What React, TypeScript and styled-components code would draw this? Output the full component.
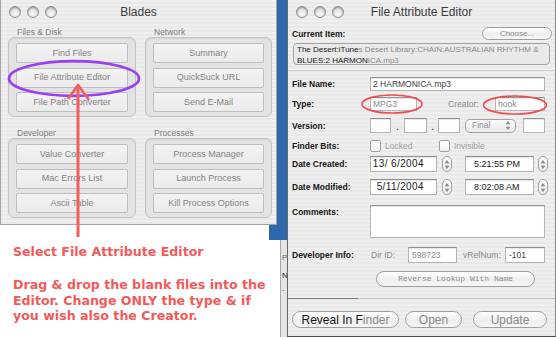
import React from "react";
import styled, { createGlobalStyle } from "styled-components";

const SANS = `"Liberation Sans", Arial, Helvetica, sans-serif`;
const MONO = `"Liberation Mono", "DejaVu Sans Mono", monospace`;
const NOTE = `"DejaVu Sans", Verdana, sans-serif`;

const GlobalStyle = createGlobalStyle`
  html, body { margin: 0; padding: 0; background: #ffffff; }
  body { font-family: ${SANS}; }
  #root { width: 560px; height: 339px; overflow: hidden; }
`;

const stripes = `repeating-linear-gradient(180deg, #efefef 0px, #efefef 2px, #e9e9e9 2px, #e9e9e9 4px)`;

const Page = styled.div`
  position: relative;
  display: flex;
  align-items: flex-start;
  width: 560px;
  height: 339px;
  background: #ffffff;
  overflow: hidden;
`;

const LeftColumn = styled.div`
  flex: none;
  width: 277px;
  display: flex;
  flex-direction: column;
`;

const Window = styled.div<{ $w: number; $h: number; $active?: boolean }>`
  flex: none;
  box-sizing: border-box;
  width: ${(p) => p.$w}px;
  height: ${(p) => p.$h}px;
  display: flex;
  flex-direction: column;
  background: ${stripes};
  border: 1px solid #a4a4a4;
  border-top: none;
  ${(p) =>
    p.$active &&
    `border-left-color: #666666; border-right-color: #8c8c8c; border-bottom-color: #4a4a4a;`}
`;

const TitleBar = styled.div`
  flex: none;
  height: 22px;
  box-sizing: border-box;
  padding: 0 8px;
  display: grid;
  grid-template-columns: 1fr auto 1fr;
  align-items: center;
`;

const Lights = styled.div`
  display: flex;
  gap: 6px;
  padding-top: 2px;
`;

const Light = styled.span`
  width: 12px;
  height: 12px;
  box-sizing: border-box;
  border-radius: 50%;
  border: 1px solid #8c8c8c;
  background: radial-gradient(circle at 50% 70%, #fbfbfb 0%, #e4e4e4 45%, #b4b4b4 100%);
  box-shadow: inset 0 1px 1px rgba(0, 0, 0, 0.18);
`;

const Title = styled.div`
  font: 12px/14px ${SANS};
  color: #3c3c3c;
  padding-top: 2px;
`;

/* ---------- Blades ---------- */

const BladesBody = styled.div`
  display: grid;
  grid-template-columns: 128px 127px;
  column-gap: 9px;
  padding: 5px 0 0 7px;
`;

const BladeColumn = styled.div`
  display: flex;
  flex-direction: column;
`;

const SectionLabel = styled.div<{ $first?: boolean }>`
  font: 8.5px/10px ${SANS};
  color: #7c7c7c;
  padding-left: 9px;
  margin-top: ${(p) => (p.$first ? 0 : 11)}px;
`;

const Group = styled.div`
  box-sizing: border-box;
  height: 80px;
  border: 1px solid #c3c3c3;
  border-radius: 6px;
  background: #e3e3e3;
  box-shadow: inset 0 1px 2px rgba(0, 0, 0, 0.07);
  padding: 5px 7px 0 7px;
  display: flex;
  flex-direction: column;
  gap: 4.5px;
`;

const BladeButton = styled.div`
  box-sizing: border-box;
  height: 20px;
  border: 1px solid #bebebe;
  border-radius: 2px;
  background: linear-gradient(180deg, #f3f3f3 0%, #ebebeb 100%);
  display: flex;
  align-items: center;
  justify-content: center;
  font: 9px/1 ${SANS};
  color: #838383;
  white-space: nowrap;
`;

/* ---------- annotation ---------- */

const BlueCornerRow = styled.div`
  flex: none;
  height: 15px;
  display: flex;
  justify-content: flex-end;
`;

const BlueCorner = styled.div`
  width: 8px;
  background: #2f67ad;
`;

const Annotation = styled.div`
  padding: 3.5px 0 0 13px;
  font: bold 12.6px/15.5px ${NOTE};
  color: #f25a5a;
  white-space: nowrap;
`;

const Note = styled.p<{ $gap?: number }>`
  margin: ${(p) => p.$gap ?? 0}px 0 0 0;
`;

/* ---------- gutter between windows ---------- */

const Gutter = styled.div`
  flex: none;
  width: 10px;
  height: 337px;
  display: flex;
  flex-direction: column;
`;

const BlueGutter = styled.div`
  flex: none;
  height: 240px;
  background: #2f67ad;
`;

const Fragment = styled.div`
  flex: 1;
  margin-left: 3px;
  background: #e4e4e4;
  border-left: 1px solid #a8a8a8;
  display: flex;
  flex-direction: column;
  overflow: hidden;
`;

const FragGlyph = styled.span<{ $mt: number; $dark?: boolean }>`
  margin-top: ${(p) => p.$mt}px;
  font: 8px/9px ${SANS};
  color: ${(p) => (p.$dark ? "#222" : "#666")};
  padding-left: 1px;
`;

/* ---------- File Attribute Editor ---------- */

const Row = styled.div<{ $top: number; $h: number; $pr?: number; $pl?: number; $between?: boolean }>`
  flex: none;
  display: flex;
  align-items: center;
  height: ${(p) => p.$h}px;
  margin-top: ${(p) => p.$top}px;
  padding-left: ${(p) => p.$pl ?? 4}px;
  padding-right: ${(p) => p.$pr ?? 10}px;
  justify-content: ${(p) => (p.$between ? "space-between" : "flex-start")};
`;

const Label = styled.div<{ $alignTop?: boolean }>`
  flex: none;
  width: 78px;
  font: bold 8.5px/10px ${SANS};
  color: #161616;
  white-space: nowrap;
  align-self: ${(p) => (p.$alignTop ? "flex-start" : "center")};
  margin-top: ${(p) => (p.$alignTop ? 2 : 0)}px;
`;

const SubLabel = styled.div<{ $w: number; $ml?: number }>`
  flex: none;
  width: ${(p) => p.$w}px;
  margin-left: ${(p) => p.$ml ?? 0}px;
  font: 8.5px/10px ${SANS};
  color: #8a8a8a;
  white-space: nowrap;
`;

const PathBox = styled.div`
  flex: none;
  box-sizing: border-box;
  height: 22px;
  margin: 3px 5px 0 5px;
  border: 1px solid #a3a3a3;
  border-radius: 4px;
  background: #e9e9e9;
  padding: 1px 0 0 3px;
  font: 8px/10.5px ${SANS};
  white-space: nowrap;
  overflow: hidden;
`;

const Tone = styled.span<{ $dark?: boolean }>`
  color: ${(p) => (p.$dark ? "#161616" : "#8a8a8a")};
`;

const Separator = styled.div<{ $top: number; $dark?: boolean }>`
  flex: none;
  height: 1px;
  margin: ${(p) => p.$top}px 0 0 0;
  background: ${(p) =>
    p.$dark
      ? "linear-gradient(90deg, #7a7a7a 0px, #7a7a7a 70px, #c6c6c6 70px)"
      : "#cfcfcf"};
`;

const Field = styled.div<{
  $w?: number;
  $ml?: number;
  $right?: boolean;
  $pad?: number;
  $size?: number;
  $tone?: string;
  $ls?: number;
}>`
  box-sizing: border-box;
  height: 100%;
  ${(p) => (p.$w ? `width: ${p.$w}px; flex: none;` : `flex: 1;`)}
  margin-left: ${(p) => p.$ml ?? 0}px;
  background: #ffffff;
  border: 1px solid #b4b4b4;
  border-top-color: #8f8f8f;
  box-shadow: inset 0 1px 1px rgba(0, 0, 0, 0.1);
  display: flex;
  align-items: center;
  justify-content: ${(p) => (p.$right ? "flex-end" : "flex-start")};
  padding: 0 ${(p) => p.$pad ?? 2}px;
  font: ${(p) => p.$size ?? 8.5}px/1 ${SANS};
  letter-spacing: ${(p) => p.$ls ?? 0}px;
  color: ${(p) => p.$tone ?? "#333"};
  white-space: nowrap;
  overflow: hidden;
`;

const Dot = styled.span<{ $w: number }>`
  flex: none;
  width: ${(p) => p.$w}px;
  text-align: center;
  font: bold 9px/1 ${SANS};
  color: #555;
  padding-top: 3px;
`;

const Popup = styled.div<{ $w: number; $ml: number }>`
  flex: none;
  box-sizing: border-box;
  width: ${(p) => p.$w}px;
  height: 14px;
  margin-left: ${(p) => p.$ml}px;
  border: 1px solid #a3a3a3;
  border-radius: 5px;
  background: linear-gradient(180deg, #fbfbfb 0%, #e8e8e8 100%);
  display: flex;
  align-items: center;
  justify-content: space-between;
  padding: 0 4px 0 6px;
  font: 8.5px/1 ${SANS};
  color: #8c8c8c;
`;

const Stepper = styled.div<{ $ml: number }>`
  flex: none;
  box-sizing: border-box;
  width: 10px;
  height: 16px;
  margin-left: ${(p) => p.$ml}px;
  border: 1px solid #a2a2a2;
  border-radius: 5px;
  background: linear-gradient(180deg, #ffffff 0%, #ececec 100%);
  display: flex;
  align-items: center;
  justify-content: center;
`;

const CheckItem = styled.div<{ $w: number }>`
  flex: none;
  width: ${(p) => p.$w}px;
  display: flex;
  align-items: center;
  gap: 4px;
`;

const CheckBox = styled.span`
  box-sizing: border-box;
  width: 11px;
  height: 12px;
  border: 1px solid #a0a0a0;
  border-radius: 2px;
  background: linear-gradient(180deg, #ffffff 0%, #f0f0f0 100%);
`;

const CheckText = styled.span`
  font: 8.5px/1 ${SANS};
  color: #a0a0a0;
`;

const Pill = styled.div<{ $w: number; $h: number; $size: number; $ml?: number; $mono?: boolean }>`
  flex: none;
  box-sizing: border-box;
  width: ${(p) => p.$w}px;
  height: ${(p) => p.$h}px;
  margin-left: ${(p) => p.$ml ?? 0}px;
  border: 1px solid #9e9e9e;
  border-radius: 999px;
  background: linear-gradient(180deg, #ffffff 0%, #efefef 55%, #f6f6f6 100%);
  display: flex;
  align-items: center;
  justify-content: center;
  font: ${(p) => p.$size}px/1 ${(p) => (p.$mono ? MONO : SANS)};
  color: #8a8a8a;
  white-space: nowrap;
`;

const Overlay = styled.svg`
  position: absolute;
  left: 0;
  top: 0;
  pointer-events: none;
`;

const Arrows = () => (
  <svg width="6" height="11" viewBox="0 0 6 11">
    <path d="M3 1 L5.4 4.2 H0.6 Z M3 10 L5.4 6.8 H0.6 Z" fill="#8a8a8a" />
  </svg>
);

const bladeGroups = [
  [
    { label: "Files & Disk", items: ["Find Files", "File Attribute Editor", "File Path Converter"] },
    { label: "Developer", items: ["Value Converter", "Mac Errors List", "Ascii Table"] },
  ],
  [
    { label: "Network", items: ["Summary", "QuickSuck URL", "Send E-Mail"] },
    { label: "Processes", items: ["Process Manager", "Launch Process", "Kill Process Options"] },
  ],
];

const TrafficLights = () => (
  <Lights>
    <Light />
    <Light />
    <Light />
  </Lights>
);

export default function App() {
  return (
    <>
      <GlobalStyle />
      <Page>
        <LeftColumn>
          <Window $w={277} $h={225}>
            <TitleBar>
              <TrafficLights />
              <Title>Blades</Title>
              <span />
            </TitleBar>
            <BladesBody>
              {bladeGroups.map((col, ci) => (
                <BladeColumn key={ci}>
                  {col.map((g, gi) => (
                    <React.Fragment key={g.label}>
                      <SectionLabel $first={gi === 0}>{g.label}</SectionLabel>
                      <Group>
                        {g.items.map((it) => (
                          <BladeButton key={it}>{it}</BladeButton>
                        ))}
                      </Group>
                    </React.Fragment>
                  ))}
                </BladeColumn>
              ))}
            </BladesBody>
          </Window>
          <BlueCornerRow>
            <BlueCorner />
          </BlueCornerRow>
          <Annotation>
            <Note>Select File Attribute Editor</Note>
            <Note $gap={18}>
              Drag &amp; drop the blank files into the
              <br />
              Editor. Change ONLY the type &amp; if
              <br />
              you wish also the Creator.
            </Note>
          </Annotation>
        </LeftColumn>

        <Gutter>
          <BlueGutter />
          <Fragment>
            <FragGlyph $mt={13}>P</FragGlyph>
            <FragGlyph $mt={9} $dark>N</FragGlyph>
            <FragGlyph $mt={5}>-</FragGlyph>
          </Fragment>
        </Gutter>

        <Window $w={269} $h={337} $active>
          <TitleBar>
            <TrafficLights />
            <Title>File Attribute Editor</Title>
            <span />
          </TitleBar>

          <Row $top={5} $h={13} $pr={3} $between>
            <Label>Current Item:</Label>
            <Pill $w={70} $h={13} $size={8}>
              Choose...
            </Pill>
          </Row>

          <PathBox>
            <Tone $dark>The Desert:iTune</Tone>
            <Tone>s Desert Library:CHAIN:AUSTRALIAN RHYTHM &amp;</Tone>
            <br />
            <Tone $dark>BLUES:2 HARMON</Tone>
            <Tone>ICA.mp3</Tone>
          </PathBox>

          <Separator $top={5} />

          <Row $top={6} $h={14}>
            <Label>File Name:</Label>
            <Field $tone="#3a3a3a">2 HARMONICA.mp3</Field>
          </Row>

          <Row $top={6} $h={14}>
            <Label>Type:</Label>
            <Field $w={47} $tone="#8a8a8a">MPG3</Field>
            <SubLabel $w={47} $ml={31}>Creator:</SubLabel>
            <Field $tone="#8a8a8a">hook</Field>
          </Row>

          <Row $top={7} $h={15}>
            <Label>Version:</Label>
            <Field $w={21} />
            <Dot $w={13}>.</Dot>
            <Field $w={23} />
            <Dot $w={11}>.</Dot>
            <Field $w={22} />
            <Popup $w={51} $ml={5}>
              Final
              <Arrows />
            </Popup>
            <Field $w={22} $ml={7} />
          </Row>

          <Row $top={7} $h={12}>
            <Label>Finder Bits:</Label>
            <CheckItem $w={69}>
              <CheckBox />
              <CheckText>Locked</CheckText>
            </CheckItem>
            <CheckItem $w={60}>
              <CheckBox />
              <CheckText>Invisible</CheckText>
            </CheckItem>
          </Row>

          <Row $top={4} $h={16}>
            <Label>Date Created:</Label>
            <Field $w={67} $right $pad={12} $size={10} $ls={0.4} $tone="#1a1a1a">
              13/ 6/2004
            </Field>
            <Stepper $ml={5}>
              <Arrows />
            </Stepper>
            <Field $w={69} $ml={13} $pad={8} $size={9} $tone="#1a1a1a">
              5:21:55 PM
            </Field>
            <Stepper $ml={4}>
              <Arrows />
            </Stepper>
          </Row>

          <Row $top={7} $h={16}>
            <Label>Date Modified:</Label>
            <Field $w={67} $right $pad={12} $size={10} $ls={0.4} $tone="#1a1a1a">
              5/11/2004
            </Field>
            <Stepper $ml={5}>
              <Arrows />
            </Stepper>
            <Field $w={69} $ml={13} $pad={8} $size={9} $tone="#1a1a1a">
              8:02:08 AM
            </Field>
            <Stepper $ml={4}>
              <Arrows />
            </Stepper>
          </Row>

          <Row $top={10} $h={33}>
            <Label $alignTop>Comments:</Label>
            <Field />
          </Row>

          <Row $top={9} $h={16}>
            <Label>Developer Info:</Label>
            <SubLabel $w={37} $ml={1}>Dir ID:</SubLabel>
            <Field $w={49} $pad={3} $tone="#8a8a8a">598723</Field>
            <SubLabel $w={42} $ml={6}>vRefNum:</SubLabel>
            <Field $w={40} $pad={3} $tone="#444">-101</Field>
          </Row>

          <Row $top={8} $h={16}>
            <Pill $w={159} $h={16} $size={8} $ml={84} $mono>
              Reverse Lookup With Name
            </Pill>
          </Row>

          <Separator $top={11} $dark />

          <Row $top={12} $h={17}>
            <Pill $w={107} $h={17} $size={12}>
              <Tone $dark>Reveal In F</Tone>
              <Tone>inder</Tone>
            </Pill>
            <Pill $w={57} $h={17} $size={12} $ml={6}>
              Open
            </Pill>
            <Pill $w={74} $h={17} $size={12} $ml={11}>
              Update
            </Pill>
          </Row>
        </Window>

        <Overlay width={560} height={339} viewBox="0 0 560 339">
          <ellipse cx={74} cy={78.5} rx={65} ry={17.3} fill="none" stroke="#9c3ef3" strokeWidth={2.8} />
          <line x1={78} y1={86} x2={78} y2={237} stroke="#f25d5d" strokeWidth={3} />
          <polyline points="68,99 78,85 89,100" fill="none" stroke="#f25d5d" strokeWidth={2.6} strokeLinejoin="round" />
          <ellipse cx={392} cy={104} rx={30} ry={9} fill="none" stroke="#ee4a50" strokeWidth={1.6} />
          <ellipse cx={515} cy={105} rx={31.5} ry={9} fill="none" stroke="#ee4a50" strokeWidth={1.6} />
        </Overlay>
      </Page>
    </>
  );
}
